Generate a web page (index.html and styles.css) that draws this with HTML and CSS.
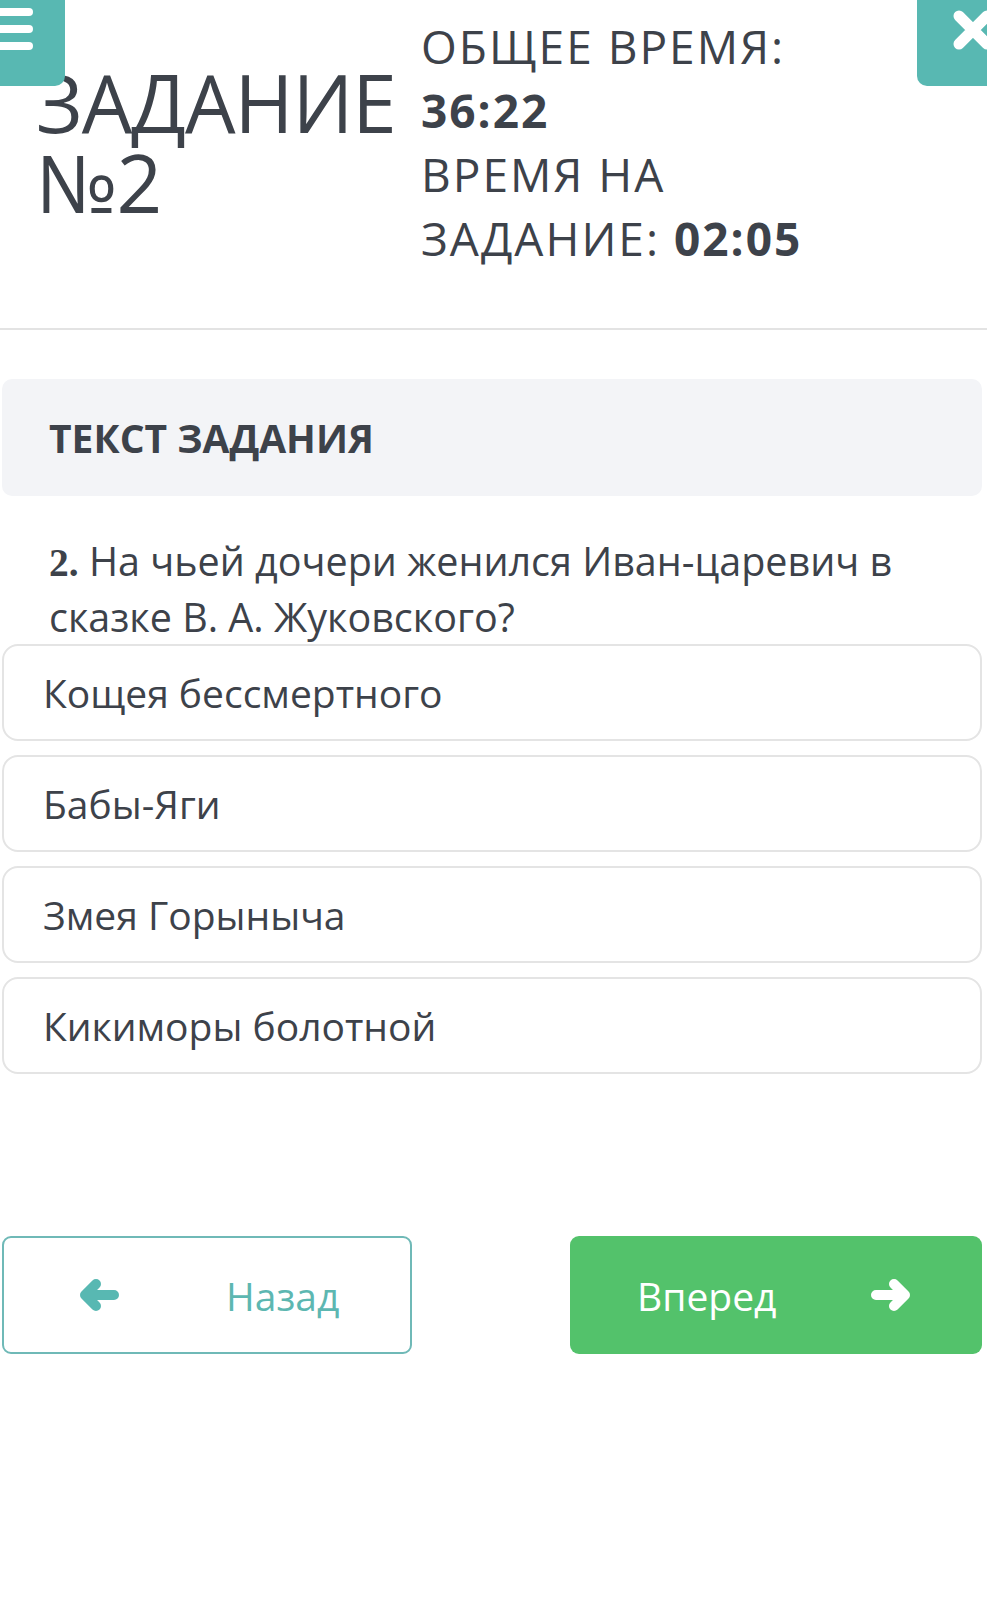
FILE: index.html
```html
<!DOCTYPE html>
<html lang="ru">
<head>
    <meta charset="UTF-8">
    <meta name="viewport" content="width=device-width, initial-scale=1.0">
    <title>Задание №2</title>
    <link rel="stylesheet" href="styles.css">
</head>
<body>
    <button class="menu-btn" aria-label="Меню">
        <span></span><span></span><span></span>
    </button>
    <button class="close-btn" aria-label="Закрыть">
        <svg width="44" height="44" viewBox="0 0 44 44">
            <path d="M8 8 L36 36 M36 8 L8 36" stroke="#fff" stroke-width="11" stroke-linecap="round"/>
        </svg>
    </button>

    <header class="task-header">
        <h1 class="task-title">ЗАДАНИЕ №2</h1>
        <div class="timer">
            <div>ОБЩЕЕ ВРЕМЯ: <b>36:22</b></div>
            <div>ВРЕМЯ НА ЗАДАНИЕ: <b>02:05</b></div>
        </div>
    </header>

    <main class="content">
        <section class="task-label">
            <h2>ТЕКСТ ЗАДАНИЯ</h2>
        </section>

        <p class="question"><span class="num">2.</span> На чьей дочери женился Иван-царевич в сказке В. А. Жуковского?</p>

        <div class="answers">
            <div class="answer">Кощея бессмертного</div>
            <div class="answer">Бабы-Яги</div>
            <div class="answer">Змея Горыныча</div>
            <div class="answer">Кикиморы болотной</div>
        </div>

        <div class="nav">
            <button class="nav-btn back">
                <svg width="40" height="34" viewBox="0 0 40 34">
                    <path d="M16 6 L5 17 L16 28 M5 17 L34 17" fill="none" stroke="#58b8b2" stroke-width="10" stroke-linecap="round" stroke-linejoin="round"/>
                </svg>
                <span>Назад</span>
            </button>
            <button class="nav-btn next">
                <span>Вперед</span>
                <svg width="40" height="34" viewBox="0 0 40 34">
                    <path d="M24 6 L35 17 L24 28 M35 17 L6 17" fill="none" stroke="#fff" stroke-width="10" stroke-linecap="round" stroke-linejoin="round"/>
                </svg>
            </button>
        </div>
    </main>
</body>
</html>
```

FILE: styles.css
```css
body {
    font-family: 'Open Sans', 'Liberation Sans', sans-serif;
    margin: 0;
    background: #fff;
    color: #3d424a;
}
button {
    font-family: inherit;
    border: none;
    padding: 0;
    cursor: pointer;
    box-sizing: border-box;
}

/* floating buttons */
.menu-btn {
    position: absolute;
    top: 0;
    left: 0;
    width: 65px;
    height: 86px;
    background: #58b8b2;
    border-radius: 0 0 10px 0;
    display: flex;
    flex-direction: column;
    gap: 9px;
    padding-top: 8px;
    z-index: 2;
}
.menu-btn span {
    display: block;
    width: 33px;
    height: 8px;
    background: #fff;
    border-radius: 0 4px 4px 0;
}
.close-btn {
    position: absolute;
    top: 0;
    right: 0;
    width: 70px;
    height: 86px;
    background: #58b8b2;
    border-radius: 0 0 0 10px;
    overflow: hidden;
    z-index: 2;
}
.close-btn svg {
    position: absolute;
    left: 34px;
    top: 8px;
}

/* header */
.task-header {
    display: grid;
    grid-template-columns: 385px 440px;
    align-items: center;
    padding: 14px 0 58px 36px;
    border-bottom: 2px solid #e3e3e3;
}
.task-title {
    margin: 0;
    font-size: 80px;
    font-weight: 400;
    line-height: 80px;
    letter-spacing: -1px;
}
.timer {
    font-size: 46px;
    font-weight: 400;
    line-height: 64px;
    letter-spacing: 2px;
}
.timer b {
    font-weight: 700;
}

/* content */
.content {
    padding: 49px 5px 0 2px;
}
.task-label {
    background: #f3f4f7;
    border-radius: 10px;
    height: 117px;
    display: flex;
    align-items: center;
    padding-left: 47px;
}
.task-label h2 {
    margin: 0;
    font-size: 39px;
    font-weight: 700;
}
.question {
    margin: 38px 0 0;
    padding-left: 47px;
    font-size: 39.5px;
    line-height: 54px;
}
.question .num {
    font-family: 'Liberation Serif', serif;
    font-weight: 700;
}
.answers {
    display: flex;
    flex-direction: column;
    gap: 14px;
}
.answer {
    height: 93px;
    border: 2px solid #e4e4e4;
    border-radius: 16px;
    display: flex;
    align-items: center;
    padding-left: 39px;
    font-size: 39px;
}

/* navigation */
.nav {
    display: flex;
    justify-content: space-between;
    margin-top: 162px;
}
.nav-btn {
    width: 412px;
    height: 118px;
    border-radius: 9px;
    display: flex;
    align-items: center;
    font-size: 39px;
}
.nav-btn.back {
    width: 410px;
    background: #fff;
    border: 2px solid #6fb9b7;
    color: #5db7b1;
    padding-left: 76px;
    gap: 106px;
}
.nav-btn.next {
    background: #53c26b;
    color: #fff;
    padding-left: 67px;
    gap: 94px;
}
```
